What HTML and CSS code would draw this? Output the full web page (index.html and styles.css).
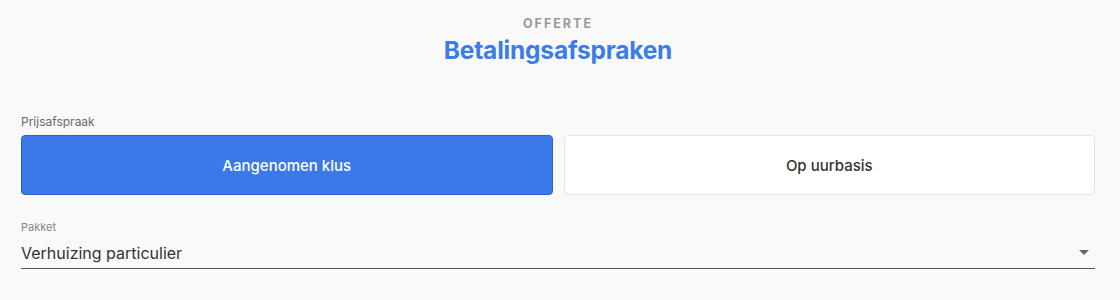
FILE: index.html
```html
<!DOCTYPE html>
<html lang="nl">
<head>
  <meta charset="UTF-8">
  <title>Betalingsafspraken</title>
  <link rel="stylesheet" href="styles.css">
</head>
<body>
  <div class="page">
    <!-- Header -->
    <div class="header">
      <div class="eyebrow">OFFERTE</div>
      <h1>Betalingsafspraken</h1>
    </div>

    <!-- Prijsafspraak -->
    <div class="field">
      <div class="label">Prijsafspraak</div>
      <div class="toggle">
        <button class="option active">Aangenomen klus</button>
        <button class="option">Op uurbasis</button>
      </div>
    </div>

    <!-- Pakket -->
    <div class="field select-field">
      <div class="label small">Pakket</div>
      <div class="select">
        <span>Verhuizing particulier</span>
        <span class="caret"></span>
      </div>
    </div>
  </div>
</body>
</html>
```

FILE: styles.css
```css
/* Reset */
* {
  margin: 0;
  padding: 0;
  box-sizing: border-box;
}

body {
  font-family: Inter, "Open Sans", sans-serif;
  background-color: #f9f9f9;
  color: #333;
  width: 1120px;
  height: 300px;
  overflow: hidden;
}

.page {
  padding: 16px 25px 0 21px;
}

/* Header */
.header {
  text-align: center;
}

.eyebrow {
  font-size: 12.5px;
  font-weight: 700;
  letter-spacing: 2px;
  color: #9a9a9a;
  line-height: 16px;
}

.header h1 {
  font-size: 24.5px;
  font-weight: 700;
  color: #3b7de6;
  line-height: 30px;
  margin-top: 3px;
  letter-spacing: -0.2px;
}

/* Fields */
.field {
  margin-top: 49px;
}

.label {
  font-size: 12px;
  color: #6b6b6b;
  line-height: 16px;
  margin-bottom: 5px;
}

.label.small {
  font-size: 11px;
  color: #858585;
  margin-bottom: 2px;
}

/* Toggle buttons */
.toggle {
  display: flex;
  gap: 11px;
}

.option {
  flex: 1;
  height: 60px;
  border: 1px solid #e6e6e6;
  border-radius: 4px;
  background-color: #fff;
  color: #333;
  font-family: inherit;
  font-size: 15px;
  font-weight: 500;
  cursor: pointer;
}

.option.active {
  background-color: #3b78e8;
  border-color: #2d62c4;
  color: #fff;
}

/* Select */
.select-field {
  margin-top: 24px;
}

.select {
  display: flex;
  align-items: center;
  justify-content: space-between;
  height: 32px;
  border-bottom: 1px solid #555;
  font-size: 16px;
  color: #333;
}

.caret {
  width: 0;
  height: 0;
  border-left: 5px solid transparent;
  border-right: 5px solid transparent;
  border-top: 5px solid #666;
  margin-right: 6px;
}
```
